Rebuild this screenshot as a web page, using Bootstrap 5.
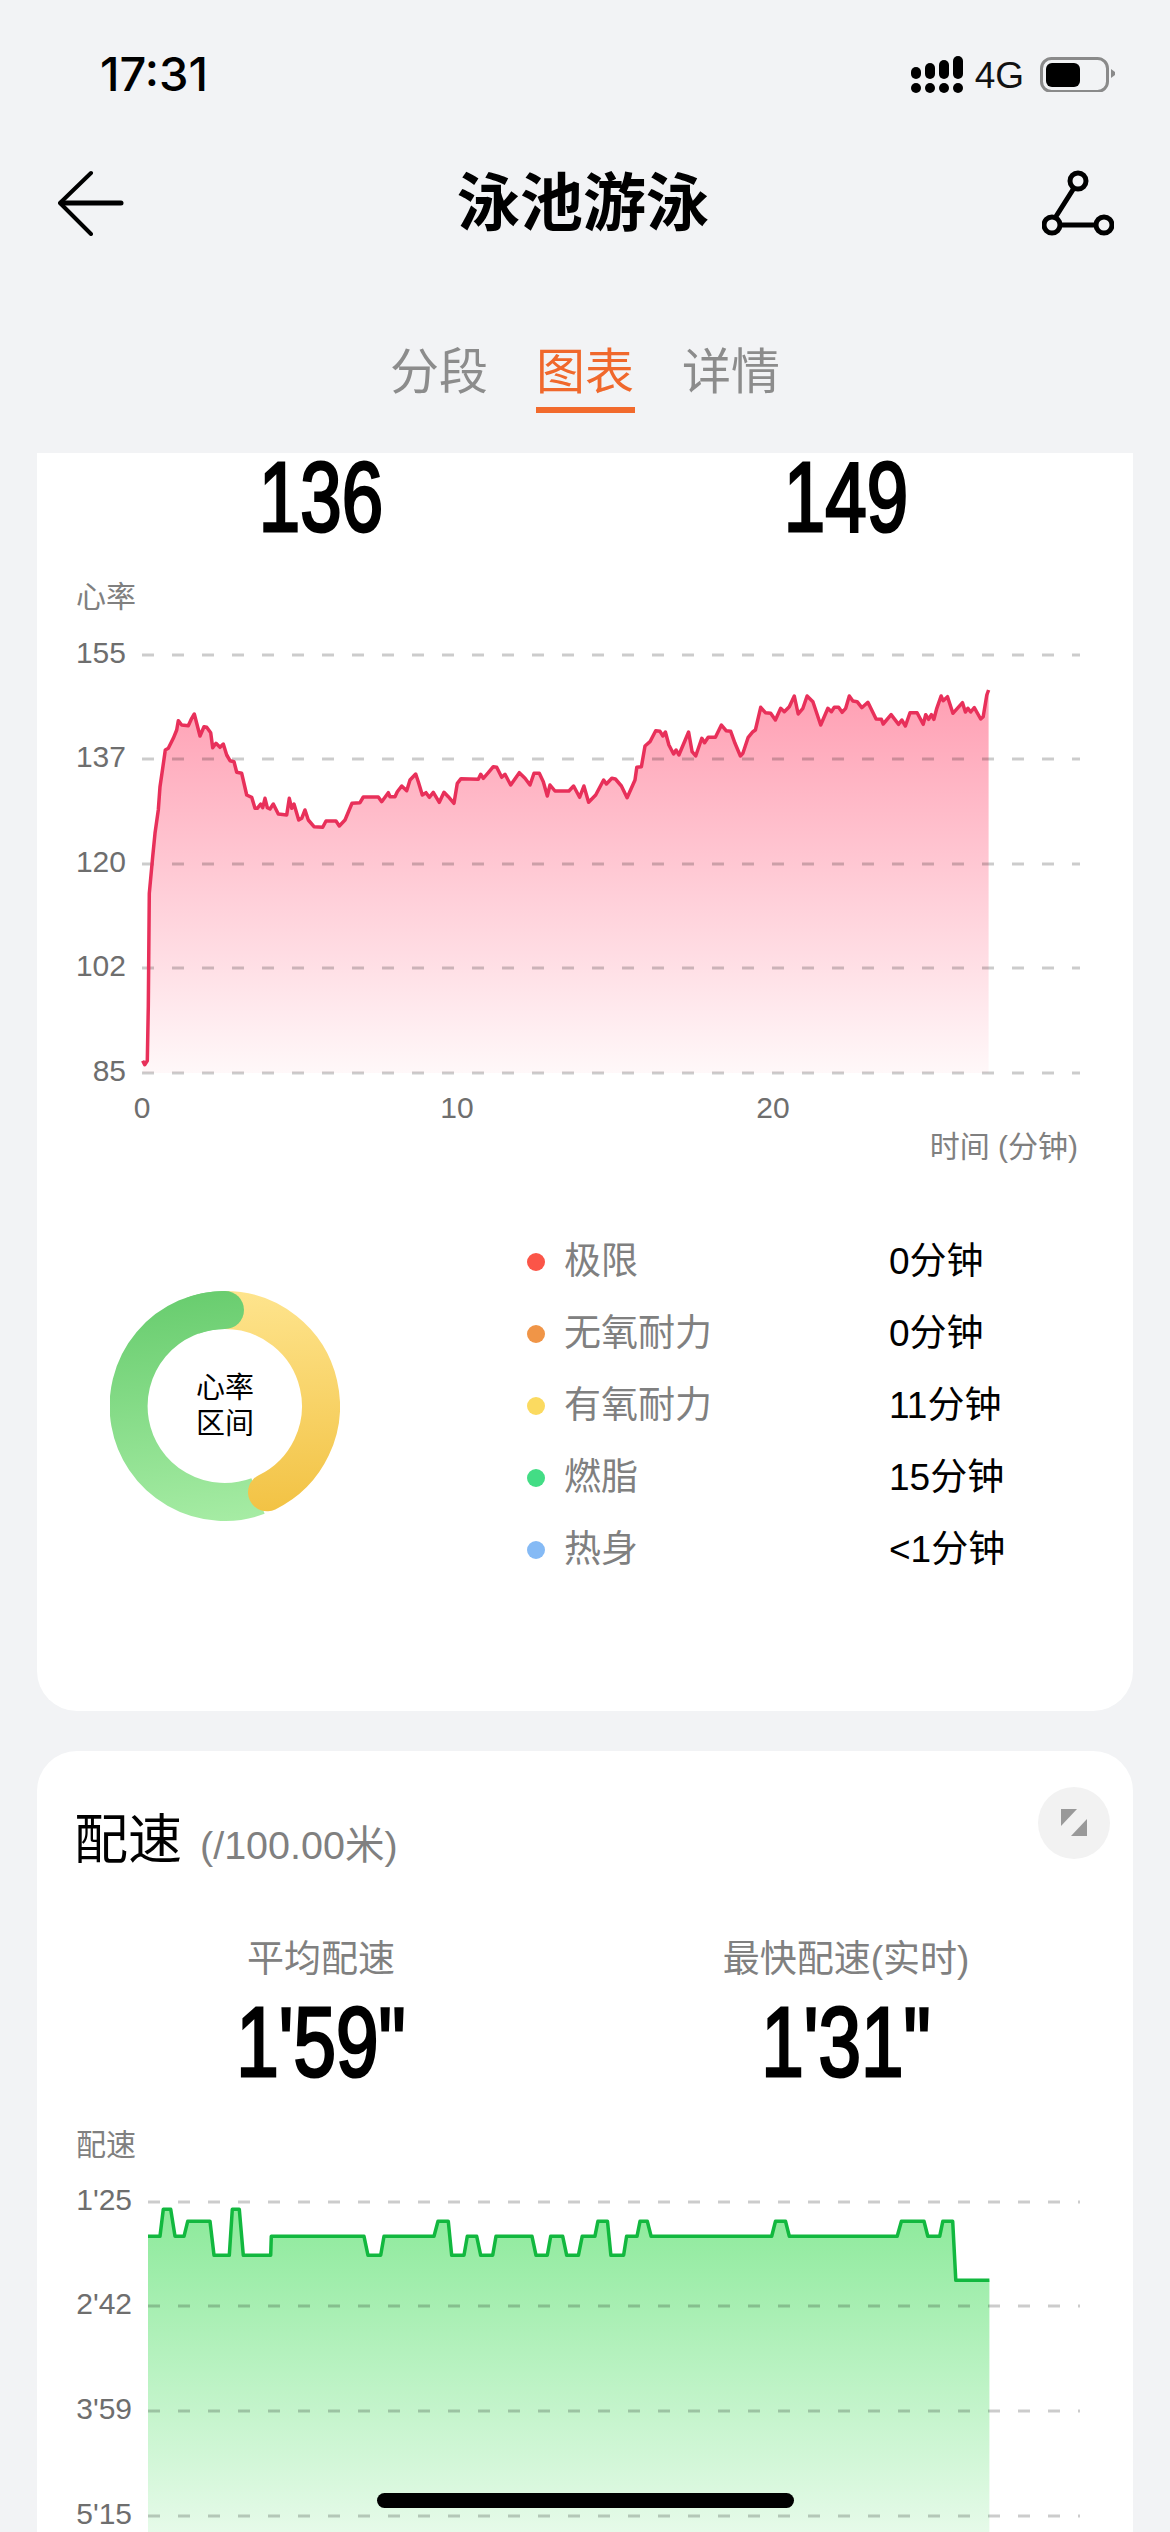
<!DOCTYPE html>
<html lang="zh-CN">
<head>
  <meta charset="UTF-8" />
  <meta name="viewport" content="width=device-width, initial-scale=1.0"/>
  <title>泳池游泳</title>
  <link href="https://cdn.jsdelivr.net/npm/bootstrap@5.3.2/dist/css/bootstrap.min.css" rel="stylesheet"/>
  <style>
    body {
      margin: 0;
      background: #f2f3f5;
      font-family: "Liberation Sans", "Noto Sans CJK SC", sans-serif;
    }
    .phone {
      width: 1170px;
      height: 2532px;
      overflow: hidden;
      background: #f2f3f5;
    }
    .status-row {
      height: 120px;
      padding: 52px 54px 0 100px;
    }
    .clock {
      font-family: Inter, "Liberation Sans", sans-serif;
      font-size: 47px;
      font-weight: 500;
      line-height: 44px;
      color: #000;
    }
    .net-label {
      margin-top: 3px;
      font-size: 37px;
      line-height: 42px;
      color: #111;
    }
    .signal-icon {
      margin-top: 4px;
    }
    .title-row {
      height: 166px;
      padding: 0 56px 0 58px;
    }
    .page-title {
      font-size: 63px;
      font-weight: 700;
      line-height: 70px;
      color: #000;
    }
    .tab-row {
      height: 167px;
      gap: 47px;
    }
    .tab-item {
      width: 99px;
      padding-top: 57px;
      font-size: 49px;
      line-height: 58px;
      text-align: center;
      color: #8c8c8c;
    }
    .tab-item.on {
      color: #f0682c;
    }
    .tab-item.on::after {
      content: "";
      display: block;
      height: 6px;
      margin-top: 6px;
      background: #f26a2c;
    }
    .sheet {
      margin: 0 37px;
      border: 0;
      background: #fff;
      border-radius: 40px;
    }
    .sheet-cut {
      border-radius: 0 0 40px 40px;
      padding-bottom: 125px;
    }
    .sheet-next {
      margin-top: 40px;
    }
    .big-stats {
      display: grid;
      grid-template-columns: 568px 482px;
    }
    .big-num {
      display: block;
      font-size: 98px;
      font-weight: 400;
      line-height: 70px;
      text-align: center;
      color: #000;
      -webkit-text-stroke: 3px #000;
      transform: scaleX(.76);
    }
    .stat-top {
      padding-top: 9px;
      margin-bottom: 43px;
    }
    .chart-svg {
      display: block;
    }
    .chart-svg text {
      font-size: 30px;
      fill: #6e6e6e;
    }
    .chart-svg text.axis-name {
      fill: #808080;
    }
    .zone-wrap {
      margin-top: 61px;
    }
    .ring-box {
      width: 230px;
      height: 230px;
      margin-left: 73px;
    }
    .ring-text {
      font-size: 29px;
      line-height: 36px;
      text-align: center;
      color: #000;
    }
    .zone-list {
      width: 560px;
      margin-left: 187px;
    }
    .zone-row {
      height: 72px;
      font-size: 37px;
    }
    .zone-dot {
      width: 18px;
      height: 18px;
      margin-right: 19px;
      border-radius: 50%;
      flex: none;
    }
    .zone-name {
      width: 325px;
      color: #808080;
    }
    .zone-val {
      color: #000;
    }
    .pace-head {
      padding: 36px 23px 0 37px;
    }
    .pace-title {
      margin-top: 17px;
      font-size: 54px;
      line-height: 72px;
      color: #000;
    }
    .pace-unit {
      margin-left: 18px;
      font-size: 39.500px;
      color: #808080;
    }
    .expand-btn {
      width: 72px;
      height: 72px;
      padding: 0;
      border: 0;
      border-radius: 50%;
      background: #f2f2f2;
    }
    .pace-stats {
      margin-top: 54px;
      margin-bottom: 30px;
    }
    .stat-name {
      font-size: 37px;
      line-height: 50px;
      text-align: center;
      color: #808080;
    }
    .pace-num {
      margin-top: 22px;
      margin-bottom: 15px;
      transform: scaleX(.78);
    }
    .home-bar {
      left: 377px;
      top: 2493px;
      width: 417px;
      height: 15px;
      border-radius: 8px;
      background: #000;
    }
  </style>
</head>
<body>
  <div class="phone position-relative">
    <div class="status-row d-flex justify-content-between align-items-start">
      <span class="clock">17:31</span>
      <div class="d-flex align-items-start">
        <svg class="signal-icon" width="56" height="40" viewBox="0 0 56 40" fill="#000">
          <rect x="0" y="11" width="10" height="12" rx="5"/>
          <rect x="14" y="7" width="10" height="16" rx="5"/>
          <rect x="28" y="4" width="10" height="19" rx="5"/>
          <rect x="42" y="0" width="10" height="23" rx="5"/>
          <rect x="0" y="27" width="10" height="10" rx="5"/>
          <rect x="14" y="27" width="10" height="10" rx="5"/>
          <rect x="28" y="27" width="10" height="10" rx="5"/>
          <rect x="42" y="27" width="10" height="10" rx="5"/>
        </svg>
        <span class="net-label ms-2">4G</span>
        <svg class="ms-3" width="76" height="40" viewBox="0 0 76 40">
          <rect x="1.500" y="6.500" width="66" height="33" rx="10" fill="none" stroke="#8a8a8a" stroke-width="3"/>
          <rect x="6" y="11" width="34" height="24" rx="6" fill="#000"/>
          <path d="M71 17l4 3v3l-4 3z" fill="#8a8a8a"/>
        </svg>
      </div>
    </div>

    <div class="title-row d-flex justify-content-between align-items-center">
      <svg width="66" height="66" viewBox="0 0 66 66" fill="none" stroke="#000" stroke-linecap="round" stroke-linejoin="round">
        <path d="M33 3L2 33l31 31" stroke-width="4"/>
        <path d="M3 33h60" stroke-width="5"/>
      </svg>
      <span class="page-title">泳池游泳</span>
      <svg width="72" height="66" viewBox="0 0 72 66" fill="none" stroke="#000" stroke-width="5">
        <circle cx="36" cy="11" r="8"/>
        <circle cx="10" cy="55" r="8"/>
        <circle cx="62" cy="55" r="8"/>
        <path d="M32 18L13 48M18 55h36"/>
      </svg>
    </div>

    <div class="tab-row nav justify-content-center">
      <div class="tab-item">分段</div>
      <div class="tab-item on">图表</div>
      <div class="tab-item">详情</div>
    </div>

    <div class="card sheet sheet-cut">
      <div class="big-stats stat-top">
        <span class="big-num">136</span>
        <span class="big-num">149</span>
      </div>
      <svg id="heartChart" class="chart-svg" width="1096" height="590" viewBox="37 575 1096 590"></svg>

      <div class="zone-wrap d-flex align-items-center">
        <div class="ring-box position-relative">
          <svg width="230" height="230" viewBox="0 0 230 230" fill="none" stroke-width="38">
            <defs>
              <linearGradient id="ringGreen" gradientUnits="userSpaceOnUse" x1="100" y1="0" x2="130" y2="230">
                <stop offset="0" stop-color="#69cd6f"/>
                <stop offset="1" stop-color="#a6eca4"/>
              </linearGradient>
              <linearGradient id="ringYellow" gradientUnits="userSpaceOnUse" x1="140" y1="0" x2="150" y2="225">
                <stop offset="0" stop-color="#fee48d"/>
                <stop offset="1" stop-color="#f2c243"/>
              </linearGradient>
            </defs>
            <path d="M148 205A96 96 0 1 1 115 19" stroke="url(#ringGreen)"/>
            <path d="M115 19A96 96 0 0 1 157 201.300" stroke="url(#ringYellow)" stroke-linecap="round"/>
            <path d="M82 25A96 96 0 0 1 115 19" stroke="url(#ringGreen)"/>
            <circle cx="115" cy="19" r="19" fill="url(#ringGreen)" stroke="none"/>
          </svg>
          <div class="ring-text position-absolute top-50 start-50 translate-middle">心率<br>区间</div>
        </div>
        <div class="zone-list">
          <div class="zone-row d-flex align-items-center"><span class="zone-dot" style="background:#fb5548"></span><span class="zone-name">极限</span><span class="zone-val">0分钟</span></div>
          <div class="zone-row d-flex align-items-center"><span class="zone-dot" style="background:#f09547"></span><span class="zone-name">无氧耐力</span><span class="zone-val">0分钟</span></div>
          <div class="zone-row d-flex align-items-center"><span class="zone-dot" style="background:#fbda60"></span><span class="zone-name">有氧耐力</span><span class="zone-val">11分钟</span></div>
          <div class="zone-row d-flex align-items-center"><span class="zone-dot" style="background:#43dd85"></span><span class="zone-name">燃脂</span><span class="zone-val">15分钟</span></div>
          <div class="zone-row d-flex align-items-center"><span class="zone-dot" style="background:#85baf5"></span><span class="zone-name">热身</span><span class="zone-val">&lt;1分钟</span></div>
        </div>
      </div>
    </div>

    <div class="card sheet sheet-next">
      <div class="pace-head d-flex justify-content-between align-items-start">
        <div class="pace-title">配速<span class="pace-unit">(/100.00米)</span></div>
        <button type="button" class="expand-btn btn d-flex align-items-center justify-content-center">
          <svg width="28" height="28" viewBox="0 0 28 28" fill="#999">
            <path d="M1 0h16L1 17z"/>
            <path d="M27 10v17H11z"/>
          </svg>
        </button>
      </div>
      <div class="big-stats pace-stats">
        <div>
          <div class="stat-name">平均配速</div>
          <span class="big-num pace-num">1'59"</span>
        </div>
        <div>
          <div class="stat-name">最快配速(实时)</div>
          <span class="big-num pace-num">1'31"</span>
        </div>
      </div>
      <svg id="paceChart" class="chart-svg" width="1096" height="500" viewBox="37 2120 1096 500"></svg>
    </div>

    <div class="home-bar position-absolute"></div>
  </div>

  <script src="https://cdn.jsdelivr.net/npm/bootstrap@5.3.2/dist/js/bootstrap.bundle.min.js"></script>
  <script>
    // traced from the screenshot: [x, y] pairs, two sections with their own offset and x scale
    const heartA = [248,1262,254,1274,262,1262,265,1100,268,760,278,650,285,580,295,510,300,440,308,385,316,330,325,325,340,295,350,270,355,242,365,255,385,257,395,235,403,222,410,250,420,288,432,260,440,262,452,278,458,323,468,310,480,322,490,312,500,345,510,362,522,365,530,397,545,400,560,465,575,472,585,505,592,505,602,492,608,503,615,475,622,503,630,507,640,492,655,522,680,525,688,475,695,505,702,492,716,540,725,535,735,510,745,540,762,560,788,562,798,543,828,543,838,558,855,540,876,490,900,488,910,471,955,471,965,485,975,472,985,458,990,470,1005,470,1012,455,1025,438,1040,452,1050,420,1067,402,1075,425,1087,465,1098,458,1108,472,1120,457,1138,487,1152,457,1165,470,1182,490,1192,430,1203,416,1255,418,1262,403,1270,415,1285,398,1300,380,1310,382,1325,412,1335,403,1352,435,1378,398,1395,415,1410,435,1422,400,1438,400,1450,425,1462,468,1470,435,1485,453,1500,453];
    const heartB = [25,453,38,438,55,472,67,438,80,487,100,465,122,420,130,432,145,415,155,417,172,438,188,473,210,420,215,382,228,380,238,318,252,305,268,272,280,274,288,288,295,276,305,315,318,342,325,330,333,345,360,276,370,335,380,348,397,295,405,308,415,292,435,292,452,255,465,272,478,274,490,310,505,348,512,340,527,292,540,275,547,270,562,202,575,218,590,220,603,240,618,205,628,215,642,200,656,168,667,222,680,205,692,168,708,185,730,255,750,205,760,215,768,202,780,202,790,217,800,205,810,168,820,183,832,185,845,203,862,187,885,237,900,238,905,252,927,224,948,253,957,240,967,258,980,218,1000,218,1017,253,1024,224,1032,238,1040,224,1047,238,1055,205,1067,168,1073,182,1085,170,1100,220,1127,188,1135,216,1142,205,1150,216,1160,203,1178,237,1185,230,1195,165,1200,150];
    const paceA = [264,403,300,403,310,322,332,322,345,403,372,403,383,358,450,358,462,460,508,460,517,322,538,322,550,460,632,460,634,403,912,403,924,460,962,460,972,403,1122,403,1134,358,1165,358,1175,460,1212,460,1222,403,1250,403,1262,460,1298,460,1308,403,1416,403,1428,460,1462,460,1472,403,1508,403,1520,460];
    const paceB = [22,460,32,403,65,403,73,358,98,358,107,460,140,460,148,403,175,403,183,358,202,358,212,403,527,403,537,358,563,358,573,403,855,403,866,358,925,358,935,403,966,403,974,358,1000,358,1008,535,1096,535];

    function trace(raw, ox, oy, sx) {
      const pts = [];
      for (let i = 0; i < raw.length; i += 2) pts.push((ox + raw[i] / sx).toFixed(1) + ' ' + (oy + raw[i + 1] / 3).toFixed(1));
      return pts;
    }

    function drawChart(id, cfg) {
      const line = 'M' + cfg.pts.join('L');
      const first = cfg.pts[0].split(' ')[0];
      const last = cfg.pts[cfg.pts.length - 1].split(' ')[0];
      let out = `<defs><linearGradient id="${id}Fill" gradientUnits="userSpaceOnUse" x1="0" y1="${cfg.fill[0]}" x2="0" y2="${cfg.fill[1]}">
        <stop offset="0" stop-color="${cfg.fill[2]}"/><stop offset="1" stop-color="${cfg.fill[3]}"/></linearGradient></defs>`;
      out += `<path d="${line}L${last} ${cfg.base}L${first} ${cfg.base}Z" fill="url(#${id}Fill)"/>`;
      cfg.grid.forEach((g, i) => {
        out += `<line x1="${cfg.x0}" x2="1080" y1="${g}" y2="${g}" stroke="rgba(0,0,0,.2)" stroke-width="3" stroke-dasharray="12 18"/>`;
        out += `<text x="${cfg.labelX}" y="${g + 8}" text-anchor="end">${cfg.labels[i]}</text>`;
      });
      out += `<path d="${line}" fill="none" stroke="${cfg.color}" stroke-width="3.500" stroke-linejoin="round"/>`;
      out += cfg.extra;
      document.getElementById(id).innerHTML = out;
    }

    drawChart('heartChart', {
      pts: trace(heartA, 60, 640, 3).concat(trace(heartB, 560, 640, 2.8)),
      base: 1073, x0: 142, labelX: 126, color: '#e8305a',
      fill: [690, 1073, '#ff9fb3', '#fff8f9'],
      grid: [655, 759, 864, 968, 1073],
      labels: ['155', '137', '120', '102', '85'],
      extra: `<text class="axis-name" x="76" y="607">心率</text>
        <text x="142" y="1118" text-anchor="middle">0</text>
        <text x="457" y="1118" text-anchor="middle">10</text>
        <text x="773" y="1118" text-anchor="middle">20</text>
        <text class="axis-name" x="1078" y="1157" text-anchor="end">时间 (分钟)</text>`
    });

    drawChart('paceChart', {
      pts: trace(paceA, 60, 2100, 3).concat(trace(paceB, 570, 2100, 2.613)),
      base: 2620, x0: 148, labelX: 132, color: '#12b83f',
      fill: [2214, 2620, '#8eea9c', '#ffffff'],
      grid: [2200, 2304, 2409, 2514],
      labels: ["1'25", "2'42", "3'59", "5'15"],
      extra: `<text class="axis-name" x="76" y="2153">配速</text>`
    });
  </script>
</body>
</html>
